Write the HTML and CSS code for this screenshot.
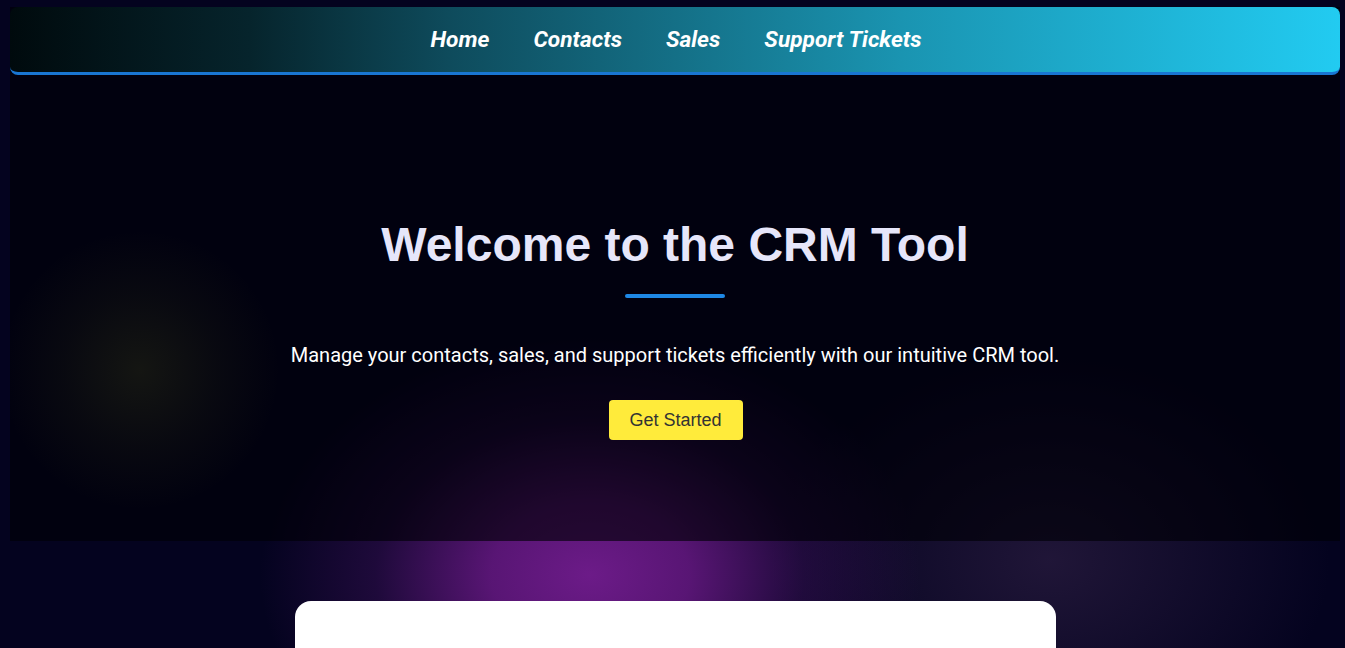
FILE: index.html
```html
<!DOCTYPE html>
<html lang="en">
<head>
<meta charset="utf-8">
<title>CRM Tool</title>
<link rel="stylesheet" href="styles.css">
</head>
<body>
  <div class="shell">
    <nav class="topnav">
      <a href="#" class="nav-link">Home</a>
      <a href="#" class="nav-link">Contacts</a>
      <a href="#" class="nav-link">Sales</a>
      <a href="#" class="nav-link">Support Tickets</a>
    </nav>
    <section class="hero">
      <h1 class="hero-title">Welcome to the CRM Tool</h1>
      <div class="hero-bar"></div>
      <p class="hero-text">Manage your contacts, sales, and support tickets efficiently with our intuitive CRM tool.</p>
      <a href="#" class="hero-btn">Get Started</a>
    </section>
  </div>
  <div class="card"></div>
</body>
</html>
```

FILE: styles.css
```css
html, body {
  margin: 0;
  padding: 0;
}

body {
  min-height: 100vh;
  padding: 7px 5px 0 10px;
  box-sizing: border-box;
  font-family: Roboto, "Liberation Sans", sans-serif;
  background:
    radial-gradient(ellipse 330px 240px at 590px 575px, rgba(108, 27, 136, 1) 0%, rgba(100, 24, 128, 0.88) 30%, rgba(70, 20, 100, 0.4) 65%, rgba(4, 3, 31, 0) 100%),
    radial-gradient(ellipse 280px 210px at 1050px 560px, rgba(60, 40, 80, 0.5) 0%, rgba(4, 3, 31, 0) 100%),
    #04031f;
  overflow: hidden;
}

.shell {
  background:
    radial-gradient(circle 140px at 130px 363px, rgba(150, 160, 40, 0.13) 0%, rgba(150, 160, 40, 0.05) 55%, rgba(0, 0, 0, 0) 100%),
    rgba(0, 0, 6, 0.64);
}

.topnav {
  height: 65px;
  display: flex;
  justify-content: center;
  align-items: center;
  gap: 44px;
  padding-left: 2px;
  border-radius: 8px;
  border-bottom: 3px solid #1976d2;
  background: linear-gradient(90deg, #000a0d 0%, #06242c 18%, #0e4b5c 33%, #1a94b1 67%, #22cbf1 100%);
}

.nav-link {
  color: #ffffff;
  text-decoration: none;
  font-family: Roboto, sans-serif;
  font-weight: 700;
  font-style: italic;
  font-size: 22.7px;
  line-height: 26px;
}

.hero {
  display: flex;
  flex-direction: column;
  align-items: center;
  padding: 142px 20px 101px;
  text-align: center;
}

.hero-title {
  margin: 0;
  font-family: "Liberation Sans", Arial, sans-serif;
  font-weight: 700;
  font-size: 48px;
  line-height: 56px;
  color: #e6e6fa;
}

.hero-bar {
  width: 100px;
  height: 4px;
  margin-top: 21px;
  border-radius: 2px;
  background: #1e88e5;
}

.hero-text {
  margin: 42px 0 0;
  font-family: Roboto, sans-serif;
  font-size: 20px;
  line-height: 30px;
  color: #ffffff;
}

.hero-btn {
  margin-top: 30px;
  display: inline-block;
  padding: 10px 21px 10px 20px;
  margin-left: 2px;
  height: 20px;
  line-height: 20px;
  font-family: "Liberation Sans", Arial, sans-serif;
  font-size: 18px;
  color: #333333;
  text-decoration: none;
  background: #ffeb3b;
  border-radius: 4px;
}

.card {
  width: 761px;
  height: 300px;
  margin: 60px auto 0;
  background: #ffffff;
  border-radius: 16px;
}
```
